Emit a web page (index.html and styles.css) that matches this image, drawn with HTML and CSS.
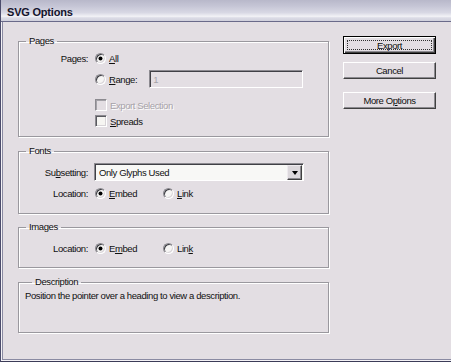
FILE: index.html
```html
<!DOCTYPE html>
<html>
<head>
<meta charset="utf-8">
<title>SVG Options</title>
<link rel="stylesheet" href="styles.css">
</head>
<body>
<div class="window">
  <div class="titlebar"><span class="title">SVG Options</span></div>
  <div class="client">
    <div class="panels">
      <fieldset class="group group-pages">
        <legend>Pages</legend>
        <div class="row row-tall">
          <span class="label">Pages:</span>
          <span class="opt"><span class="radio checked"></span><span><u>A</u>ll</span></span>
        </div>
        <div class="row row-tall row-gap">
          <span class="label"></span>
          <span class="opt"><span class="radio"></span><span><u>R</u>ange:</span></span>
          <span class="textbox disabled">1</span>
        </div>
        <div class="row row-short row-gap-lg">
          <span class="label"></span>
          <span class="opt dim"><span class="check disabled"></span><span>Export Selection</span></span>
        </div>
        <div class="row row-short row-gap-sm">
          <span class="label"></span>
          <span class="opt"><span class="check"></span><span><u>S</u>preads</span></span>
        </div>
      </fieldset>

      <fieldset class="group group-fonts">
        <legend>Fonts</legend>
        <div class="row row-tall">
          <span class="label">Su<u>b</u>setting:</span>
          <span class="select"><span class="select-text">Only Glyphs Used</span><span class="select-btn"><span class="tri"></span></span></span>
        </div>
        <div class="row row-tall row-gap-xs">
          <span class="label">Location:</span>
          <span class="opt opt-first"><span class="radio checked"></span><span><u>E</u>mbed</span></span>
          <span class="opt"><span class="radio"></span><span><u>L</u>ink</span></span>
        </div>
      </fieldset>

      <fieldset class="group group-images">
        <legend>Images</legend>
        <div class="row row-tall">
          <span class="label">Location:</span>
          <span class="opt opt-first"><span class="radio checked"></span><span>E<u>m</u>bed</span></span>
          <span class="opt"><span class="radio"></span><span>Lin<u>k</u></span></span>
        </div>
      </fieldset>

      <fieldset class="group group-desc">
        <legend>Description</legend>
        <p class="desc">Position the pointer over a heading to view a description.</p>
      </fieldset>
    </div>

    <div class="buttons">
      <button class="btn btn-default"><span class="focus">Export</span></button>
      <button class="btn btn-cancel">Cancel</button>
      <button class="btn btn-more">More O<u>p</u>tions</button>
    </div>
  </div>
</div>
</body>
</html>
```
FILE: styles.css
```css
html, body {
  margin: 0;
  padding: 0;
  background: #e3dee3;
}

body {
  font-family: "Liberation Sans", Arial, sans-serif;
  font-size: 9.5px;
  letter-spacing: -0.4px;
  color: #101010;
}

.window {
  width: 451px;
  height: 362px;
  box-sizing: border-box;
  background: #e3dee3;
  border-left: 1px solid #4c4c6c;
  border-bottom: 1px solid #3c3c58;
  box-shadow: inset 1px -1px #f4f2f6, inset 2px -2px #8a8aa2;
  display: flex;
  flex-direction: column;
}

.titlebar {
  height: 21px;
  border-bottom: 1px solid #6a6a8a;
  background: linear-gradient(to bottom, #b8b8ca 0, #c6c6d6 30%, #d8d8e4 60%, #f2f2f6 78%, #dcdce6 85%, #d0d0dc 100%);
  display: flex;
  align-items: center;
  padding-left: 6px;
}

.title {
  font-size: 11px;
  font-weight: bold;
  letter-spacing: -0.2px;
  color: #14142c;
  padding-top: 2px;
}

.client {
  display: flex;
  padding-left: 17px;
}

.panels {
  width: 311px;
  display: flex;
  flex-direction: column;
}

.group {
  margin: 0;
  padding: 0;
  min-width: 0;
  border: 1px solid #9a989e;
  box-shadow: 1px 1px #ffffff, inset 1px 1px #ffffff;
}

.group legend {
  margin-left: 7px;
  padding: 0 3px;
  line-height: 12px;
  height: 12px;
}

.group-pages {
  margin-top: 13px;
  padding: 2px 0 8px;
}

.group-fonts {
  margin-top: 8px;
  padding: 6px 0 11px;
}

.group-images {
  margin-top: 7px;
  padding: 6px 0 10px;
}

.group-desc {
  margin-top: 8px;
  padding: 2px 6px 0;
  height: 57px;
  box-sizing: border-box;
}

.row {
  display: flex;
  align-items: center;
}

.row-tall { height: 18px; }
.row-short { height: 14px; }
.row-gap { margin-top: 3px; }
.row-gap-xs { margin-top: 3px; }
.row-gap-lg { margin-top: 10px; }
.row-gap-sm { margin-top: 2px; }

.label {
  width: 69px;
  text-align: right;
  margin-right: 7px;
  flex: none;
}

.opt {
  display: flex;
  align-items: center;
  gap: 3px;
}

.opt-first {
  width: 68px;
}

.dim {
  color: #a6a2a8;
  text-shadow: 1px 1px #ffffff;
}

.radio {
  width: 11px;
  height: 11px;
  box-sizing: border-box;
  border-radius: 50%;
  border: 1px solid;
  border-color: #8c8a90 #ffffff #ffffff #8c8a90;
  background: #f6f5f4;
  box-shadow: inset 1px 1px #3e3e44, inset -1px -1px #d8d4d8;
  position: relative;
  flex: none;
}

.radio.checked::after {
  content: "";
  position: absolute;
  left: 3px;
  top: 3px;
  width: 3px;
  height: 3px;
  border-radius: 50%;
  background: #000;
  box-shadow: 0 0 0 0.5px #000;
}

.check {
  width: 12px;
  height: 12px;
  box-sizing: border-box;
  border: 1px solid;
  border-color: #8c8a90 #ffffff #ffffff #8c8a90;
  background: #f6f5f2;
  box-shadow: inset 1px 1px #5a5a60, inset -1px -1px #d8d4d8;
  flex: none;
}

.check.disabled {
  background: #e3dee3;
  box-shadow: inset 1px 1px #a4a2a8;
}

.textbox {
  margin-left: 12px;
  width: 154px;
  height: 18px;
  box-sizing: border-box;
  border: 1px solid;
  border-color: #8c8a90 #ffffff #ffffff #8c8a90;
  box-shadow: inset 1px 1px #404046;
  padding: 2px 0 0 3px;
  line-height: 13px;
}

.textbox.disabled {
  background: #e3dee3;
  color: #a6a2a8;
}

.select {
  width: 210px;
  height: 18px;
  box-sizing: border-box;
  border: 1px solid;
  border-color: #8c8a90 #ffffff #ffffff #8c8a90;
  box-shadow: inset 1px 1px #404046;
  background: #f8f8f6;
  display: flex;
  padding: 1px 1px 0 1px;
  margin-left: -1px;
}

.select-text {
  flex: 1;
  padding: 2px 0 0 3px;
  line-height: 12px;
}

.select-btn {
  width: 15px;
  height: 15px;
  box-sizing: border-box;
  background: #dcd8dc;
  border: 1px solid;
  border-color: #eeeaee #404040 #404040 #eeeaee;
  box-shadow: inset -1px -1px #8c8a90;
  display: flex;
  align-items: center;
  justify-content: center;
}

.tri {
  width: 0;
  height: 0;
  border-left: 3.5px solid transparent;
  border-right: 3.5px solid transparent;
  border-top: 4px solid #000;
  margin-bottom: -1px;
}

.desc {
  margin: 0;
  line-height: 12px;
}

.buttons {
  margin-left: 14px;
  margin-top: 14px;
  width: 93px;
  display: flex;
  flex-direction: column;
}

.btn {
  font: inherit;
  letter-spacing: inherit;
  color: #101010;
  margin: 0;
  padding: 0;
  width: 93px;
  height: 17px;
  box-sizing: border-box;
  background: #e3dee3;
  border: 1px solid;
  border-color: #ffffff #404040 #404040 #ffffff;
  box-shadow: inset -1px -1px #8c8a90;
  text-align: center;
  line-height: 14px;
}

.btn-default {
  height: 18px;
  border: 1px solid #000;
  box-shadow: inset 1px 1px #ffffff, inset -1px -1px #404040, inset -2px -2px #8c8a90;
  padding: 3px;
  display: flex;
}

.focus {
  flex: 1;
  border: 1px dotted #303030;
  line-height: 9px;
}

.btn-cancel {
  margin-top: 8px;
}

.btn-more {
  margin-top: 13px;
}
```
